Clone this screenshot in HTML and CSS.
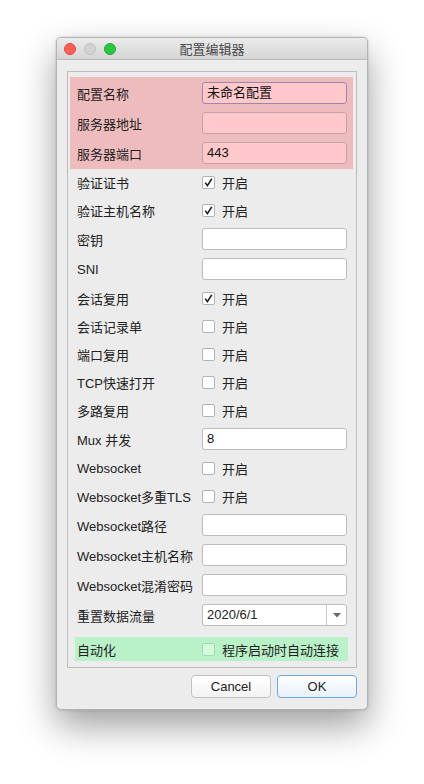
FILE: index.html
```html
<!DOCTYPE html>
<html lang="zh">
<head>
<meta charset="utf-8">
<title>配置编辑器</title>
<link rel="stylesheet" href="styles.css">
</head>
<body>
<div class="window">
  <div class="titlebar">
    <div class="lights">
      <span class="light red"></span>
      <span class="light grey"></span>
      <span class="light green"></span>
    </div>
    <div class="title">配置编辑器</div>
    <div></div>
  </div>
  <div class="content">
    <div class="frame">
      <div class="group-pink">
        <div class="row field"><span class="label">配置名称</span><div class="input focus">未命名配置</div></div>
        <div class="row field"><span class="label">服务器地址</span><div class="input"></div></div>
        <div class="row field"><span class="label">服务器端口</span><div class="input">443</div></div>
      </div>
      <div class="rows">
        <div class="row cb"><span class="label">验证证书</span><span class="check on"><svg viewBox="0 0 13 13"><path d="M3.2 6.6 L5.4 9.6 L9.8 2.8" fill="none" stroke="#222" stroke-width="1.6"/></svg></span><span class="cbtext">开启</span></div>
        <div class="row cb"><span class="label">验证主机名称</span><span class="check on"><svg viewBox="0 0 13 13"><path d="M3.2 6.6 L5.4 9.6 L9.8 2.8" fill="none" stroke="#222" stroke-width="1.6"/></svg></span><span class="cbtext">开启</span></div>
        <div class="row field"><span class="label">密钥</span><div class="input white"></div></div>
        <div class="row field"><span class="label">SNI</span><div class="input white"></div></div>
        <div class="row cb"><span class="label">会话复用</span><span class="check on"><svg viewBox="0 0 13 13"><path d="M3.2 6.6 L5.4 9.6 L9.8 2.8" fill="none" stroke="#222" stroke-width="1.6"/></svg></span><span class="cbtext">开启</span></div>
        <div class="row cb"><span class="label">会话记录单</span><span class="check"></span><span class="cbtext">开启</span></div>
        <div class="row cb"><span class="label">端口复用</span><span class="check"></span><span class="cbtext">开启</span></div>
        <div class="row cb"><span class="label">TCP快速打开</span><span class="check"></span><span class="cbtext">开启</span></div>
        <div class="row cb"><span class="label">多路复用</span><span class="check"></span><span class="cbtext">开启</span></div>
        <div class="row field"><span class="label">Mux 并发</span><div class="input white">8</div></div>
        <div class="row cb"><span class="label">Websocket</span><span class="check"></span><span class="cbtext">开启</span></div>
        <div class="row cb"><span class="label">Websocket多重TLS</span><span class="check"></span><span class="cbtext">开启</span></div>
        <div class="row field"><span class="label">Websocket路径</span><div class="input white"></div></div>
        <div class="row field"><span class="label">Websocket主机名称</span><div class="input white"></div></div>
        <div class="row field"><span class="label">Websocket混淆密码</span><div class="input white"></div></div>
        <div class="row field"><span class="label">重置数据流量</span>
          <div class="combo"><span class="combo-text">2020/6/1</span><span class="combo-btn"><svg viewBox="0 0 8 5" width="8" height="5"><path d="M0 0 L8 0 L4 4.5 Z" fill="#6a6a6a"/></svg></span></div>
        </div>
      </div>
      <div class="row cb auto"><span class="label">自动化</span><span class="check green"></span><span class="cbtext">程序启动时自动连接</span></div>
    </div>
    <div class="buttons">
      <div class="btn">Cancel</div>
      <div class="btn default">OK</div>
    </div>
  </div>
</div>
</body>
</html>
```

FILE: styles.css
```css
html, body {
  margin: 0;
  padding: 0;
  background: #ffffff;
}
body {
  font-family: "Liberation Sans", "Noto Sans CJK SC", sans-serif;
  font-size: 13px;
  color: #222222;
  min-height: 784px;
  padding-top: 37px;
  box-sizing: border-box;
}
.window {
  margin: 0 0 0 56px;
  width: 312px;
  height: 673px;
  box-sizing: border-box;
  border: 1px solid #b4b4b4;
  border-radius: 5px;
  background: #ececec;
  box-shadow: 0 16px 36px rgba(0, 0, 0, 0.38), 0 0 3px rgba(0, 0, 0, 0.18);
  overflow: hidden;
  display: flex;
  flex-direction: column;
}
.titlebar {
  height: 22px;
  box-sizing: border-box;
  border-bottom: 1px solid #b9b9b9;
  background: linear-gradient(#ebebeb, #d5d5d5);
  display: grid;
  grid-template-columns: 1fr auto 1fr;
  align-items: center;
}
.lights {
  display: flex;
  gap: 8px;
  padding-left: 7px;
}
.light {
  width: 12px;
  height: 12px;
  box-sizing: border-box;
  border-radius: 50%;
}
.light.red { background: #fc5f57; border: 1px solid #e0443e; }
.light.grey { background: #d2d2d2; border: 1px solid #c0c0c0; }
.light.green { background: #2ac840; border: 1px solid #1fa82f; }
.title {
  color: #4b4b4b;
  font-size: 13px;
  font-family: "Noto Sans CJK SC", sans-serif;
}
.content {
  padding: 11px 10px 11px 10px;
  display: flex;
  flex-direction: column;
}
.frame {
  border: 1px solid #bcbcbc;
  padding: 5px 8px 6px 7px;
  display: flex;
  flex-direction: column;
}
.group-pink {
  margin: 0 -5px;
  padding: 5px;
  background: #efbcbe;
  display: flex;
  flex-direction: column;
  gap: 8px;
}
.rows {
  margin-top: 3px;
  display: flex;
  flex-direction: column;
  gap: 8px;
}
.row {
  display: flex;
  align-items: center;
}
.row.field { height: 22px; }
.row.cb { height: 20px; }
.label {
  width: 127px;
  padding-left: 2px;
  box-sizing: border-box;
  white-space: nowrap;
  font-family: "Liberation Sans", "Noto Sans CJK SC", sans-serif;
}
.input {
  width: 145px;
  height: 22px;
  box-sizing: border-box;
  border: 1px solid #c3a4a6;
  border-radius: 3px;
  background: #ffc9cb;
  padding: 0 4px;
  line-height: 20px;
  font-size: 13px;
  color: #111;
}
.input.focus {
  border-color: #9c86ad;
}
.input.white {
  background: #ffffff;
  border-color: #bdbdbd;
}
.check {
  width: 13px;
  height: 13px;
  box-sizing: border-box;
  border: 1px solid #b3b3b3;
  border-radius: 2px;
  background: #ffffff;
  display: flex;
  align-items: center;
  justify-content: center;
}
.check svg {
  width: 13px;
  height: 13px;
  flex: none;
}
.check.green {
  background: #d2fbdb;
  border-color: #a8d6b4;
}
.cbtext {
  margin-left: 7px;
  font-family: "Noto Sans CJK SC", sans-serif;
}
.combo {
  width: 145px;
  height: 22px;
  box-sizing: border-box;
  border: 1px solid #bdbdbd;
  border-radius: 3px;
  background: #ffffff;
  display: flex;
  align-items: stretch;
}
.combo-text {
  flex: 1;
  padding-left: 4px;
  line-height: 20px;
}
.combo-btn {
  width: 19px;
  border-left: 1px solid #c8c8c8;
  display: flex;
  align-items: center;
  justify-content: center;
}
.auto {
  margin-top: 11px;
  height: 24px !important;
  background: #b9f1c9;
}
.buttons {
  margin-top: 7px;
  display: flex;
  justify-content: flex-end;
  gap: 6px;
}
.btn {
  width: 80px;
  height: 23px;
  box-sizing: border-box;
  border: 1px solid #c2c2c2;
  border-radius: 4px;
  background: linear-gradient(#ffffff, #f3f3f3);
  text-align: center;
  line-height: 21px;
  font-size: 13px;
  color: #222;
}
.btn.default {
  border-color: #6fa8ea;
  background: linear-gradient(#fdfeff, #eaf1fb);
}
```
